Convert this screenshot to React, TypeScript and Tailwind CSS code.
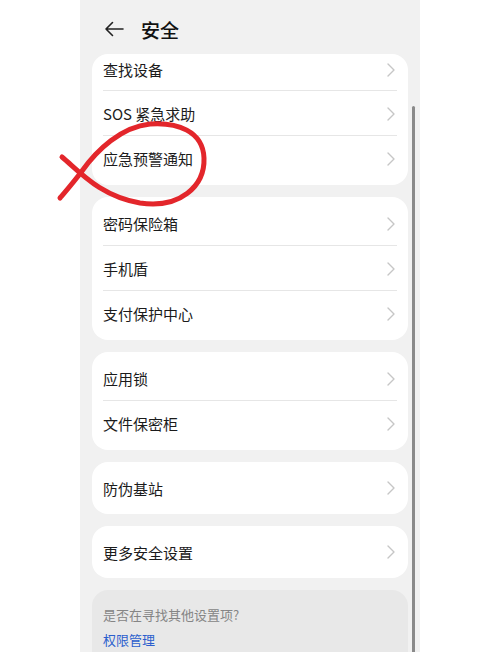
import React from "react";

const font = { fontFamily: '"Noto Sans CJK SC", "Noto Sans", sans-serif' };

function Chevron() {
  return (
    <svg width="8" height="14" viewBox="0 0 8 14" className="shrink-0">
      <polyline points="1,1 7,7 1,13" fill="none" stroke="#c6c6c6" strokeWidth="1.4" strokeLinecap="round" strokeLinejoin="round" />
    </svg>
  );
}

function Row({ label, h, last, first }: { label: string; h: string; last?: boolean; first?: boolean }) {
  return (
    <div className={`relative flex items-center justify-between pl-[11px] pr-[13px] ${h} ${first ? "pb-[6px]" : ""}`}>
      <span className="text-[15px] text-[#1b1b1b] leading-none">{label}</span>
      <Chevron />
      {!last && <div className="absolute left-[11px] right-[11px] bottom-0 h-px bg-[#e6e6e6]" />}
    </div>
  );
}

function Card({ items, rowH, firstClipped }: { items: string[]; rowH: string; firstClipped?: boolean }) {
  return (
    <div className={`bg-white rounded-[16px] ${firstClipped ? "pt-0" : "pt-[4px]"} pb-[4px]`}>
      {items.map((it, i) => (
        <Row
          key={it}
          label={it}
          h={firstClipped && i === 0 ? "h-[37px]" : rowH}
          first={firstClipped && i === 0}
          last={i === items.length - 1}
        />
      ))}
    </div>
  );
}

export default function App() {
  return (
    <div className="relative w-[500px] h-[652px] bg-white flex justify-center overflow-hidden" style={font}>
      <div className="relative w-[340px] h-[652px] bg-[#f1f1f1] overflow-hidden">
        <div className="h-[54px] flex items-center pt-[4px] pl-[24px] gap-[17px]">
          <svg width="20" height="16" viewBox="0 0 20 16">
            <path d="M19 8 H2 M8.5 1.5 L2 8 L8.5 14.5" fill="none" stroke="#222" strokeWidth="1.6" strokeLinecap="round" strokeLinejoin="round" />
          </svg>
          <span className="text-[19px] font-medium text-[#111] leading-none">安全</span>
        </div>
        <div className="flex flex-col gap-[12px] px-[12px]">
          <Card items={["查找设备", "SOS 紧急求助", "应急预警通知"]} rowH="h-[45px]" firstClipped />
          <Card items={["密码保险箱", "手机盾", "支付保护中心"]} rowH="h-[45px]" />
          <Card items={["应用锁", "文件保密柜"]} rowH="h-[45px]" />
          <Card items={["防伪基站"]} rowH="h-[44px]" />
          <Card items={["更多安全设置"]} rowH="h-[44px]" />
          <div className="bg-[#e8e8e8] rounded-[16px] pl-[11px] pt-[16px] h-[80px]">
            <div className="text-[13px] text-[#858585] leading-[18px]">是否在寻找其他设置项?</div>
            <div className="text-[13px] text-[#2c5fcd] leading-[18px] mt-[7px]">权限管理</div>
          </div>
        </div>
        <div className="absolute left-[332px] top-[106px] w-[3px] h-[560px] bg-[#8a8a8a] rounded-full" />
      </div>
      <svg className="absolute inset-0 pointer-events-none" width="500" height="652" viewBox="0 0 500 652">
        <path
          d="M 62 157 C 80 172, 100 196, 140 203 C 180 209, 205 186, 204 158 C 203 131, 177 122, 150 124 C 121 127, 97 150, 82 171 C 73 183, 66 191, 60 198"
          fill="none"
          stroke="#e3262b"
          strokeWidth="5"
          strokeLinecap="round"
          strokeLinejoin="round"
        />
      </svg>
    </div>
  );
}
